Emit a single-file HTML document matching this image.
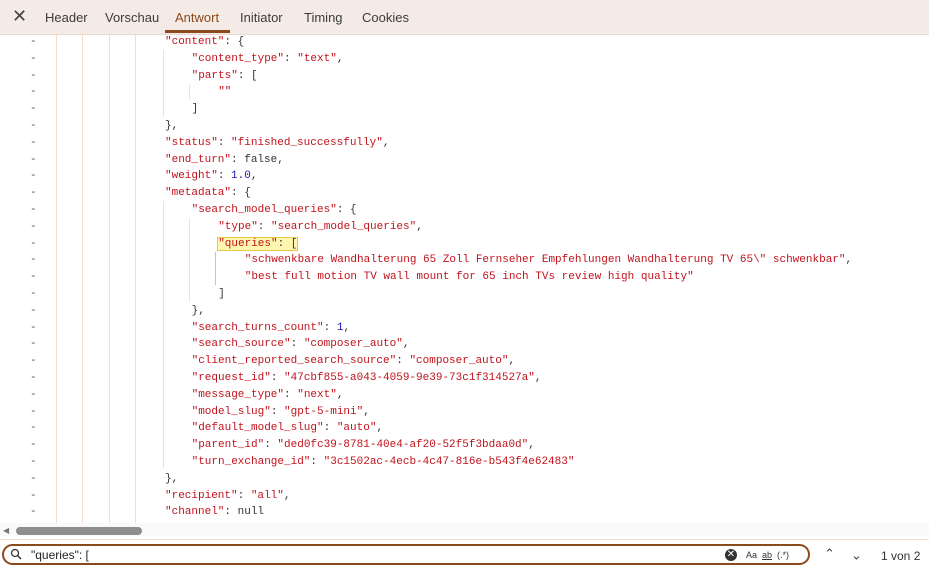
<!DOCTYPE html><html><head><style>
body{margin:0;width:929px;height:569px;overflow:hidden;background:#fff;font-family:"Liberation Sans",sans-serif;position:relative}
.tabs{position:absolute;left:0;top:0;width:929px;height:34px;background:#f4ebe6;border-bottom:1px solid #e8d8cf}
.tab{position:absolute;top:10px;font-size:13px;color:#3b3b3b}
.code{font-family:"Liberation Mono",monospace;font-size:11px}
.l{position:absolute;white-space:pre;height:17px;line-height:17px;color:#333}
.d{position:absolute;left:30px;color:#555;font-family:"Liberation Mono",monospace;font-size:11px}
.k{color:#c0131c}.s{color:#c0131c}.n{color:#1a1aa6}
.g{position:absolute;width:1px;background:#fbdcc8}
</style></head><body>
<div class="tabs">
<div style="position:absolute;left:12px;top:6px;font-size:18px;color:#444">✕</div>
<div class="tab" style="left:45px">Header</div>
<div class="tab" style="left:105px">Vorschau</div>
<div class="tab" style="left:175px;color:#8a4a1c">Antwort</div>
<div style="position:absolute;left:165px;top:30px;width:65px;height:3px;background:#8b4a1e"></div>
<div class="tab" style="left:240px">Initiator</div>
<div class="tab" style="left:304px">Timing</div>
<div class="tab" style="left:362px">Cookies</div>
</div>
<div class="g" style="left:56px;top:35px;height:488px"></div>
<div class="g" style="left:82px;top:35px;height:488px"></div>
<div class="g" style="left:109px;top:35px;height:488px"></div>
<div class="g" style="left:135px;top:35px;height:488px"></div>
<div class="g" style="left:163px;top:50px;height:67px"></div>
<div class="g" style="left:189px;top:84px;height:16px"></div>
<div class="g" style="left:163px;top:201px;height:267px"></div>
<div class="g" style="left:189px;top:218px;height:84px"></div>
<div class="g" style="left:215px;top:252px;height:33px;background:#e8b9a0"></div>
<div id="c" class="code"></div>
<div style="position:absolute;left:0;top:523px;width:929px;height:14px;background:#fafafa"></div>
<div style="position:absolute;left:3px;top:526px;font-size:8px;color:#777">◀</div>
<div style="position:absolute;left:16px;top:527px;width:126px;height:8px;border-radius:4px;background:#8e8e8e"></div>
<div style="position:absolute;left:0;top:539px;width:929px;height:1px;background:#f6dccb"></div>
<div style="position:absolute;left:2px;top:544px;width:808px;height:21px;border:2px solid #8b4a1e;border-radius:11px;box-sizing:border-box"></div>
<svg style="position:absolute;left:10px;top:548px" width="12" height="12"><circle cx="5" cy="5" r="3.5" fill="none" stroke="#333" stroke-width="1.3"/><line x1="7.5" y1="7.5" x2="11" y2="11" stroke="#333" stroke-width="1.5"/></svg>
<div style="position:absolute;left:31px;top:548px;font-size:12px;color:#222">"queries": [</div>
<div style="position:absolute;left:725px;top:549px;width:12px;height:12px;border-radius:6px;background:#333;color:#fff;font-size:10px;line-height:12px;text-align:center">✕</div>
<div style="position:absolute;left:746px;top:550px;font-size:9px;color:#333">Aa &nbsp;<u>ab</u> &nbsp;(.*)</div>
<div style="position:absolute;left:824px;top:546px;font-size:13px;color:#444">⌃</div>
<div style="position:absolute;left:851px;top:546px;font-size:13px;color:#444;transform:rotate(180deg)">⌃</div>
<div style="position:absolute;left:881px;top:549px;font-size:12px;color:#333">1 von 2</div>
<script>
const L=[[0,'<span class=k>"content"</span>: {'],[1,'<span class=k>"content_type"</span>: <span class=s>"text"</span>,'],[1,'<span class=k>"parts"</span>: ['],[2,'<span class=s>""</span>'],[1,']'],[0,'},'],[0,'<span class=k>"status"</span>: <span class=s>"finished_successfully"</span>,'],[0,'<span class=k>"end_turn"</span>: false,'],[0,'<span class=k>"weight"</span>: <span class=n>1.0</span>,'],[0,'<span class=k>"metadata"</span>: {'],[1,'<span class=k>"search_model_queries"</span>: {'],[2,'<span class=k>"type"</span>: <span class=s>"search_model_queries"</span>,'],[2,'<span style="background:#fff6b0;outline:1px solid #e8c84a"><span class=k>"queries"</span>: [</span>'],[3,'<span class=s>"schwenkbare Wandhalterung 65 Zoll Fernseher Empfehlungen Wandhalterung TV 65\\" schwenkbar"</span>,'],[3,'<span class=s>"best full motion TV wall mount for 65 inch TVs review high quality"</span>'],[2,']'],[1,'},'],[1,'<span class=k>"search_turns_count"</span>: <span class=n>1</span>,'],[1,'<span class=k>"search_source"</span>: <span class=s>"composer_auto"</span>,'],[1,'<span class=k>"client_reported_search_source"</span>: <span class=s>"composer_auto"</span>,'],[1,'<span class=k>"request_id"</span>: <span class=s>"47cbf855-a043-4059-9e39-73c1f314527a"</span>,'],[1,'<span class=k>"message_type"</span>: <span class=s>"next"</span>,'],[1,'<span class=k>"model_slug"</span>: <span class=s>"gpt-5-mini"</span>,'],[1,'<span class=k>"default_model_slug"</span>: <span class=s>"auto"</span>,'],[1,'<span class=k>"parent_id"</span>: <span class=s>"ded0fc39-8781-40e4-af20-52f5f3bdaa0d"</span>,'],[1,'<span class=k>"turn_exchange_id"</span>: <span class=s>"3c1502ac-4ecb-4c47-816e-b543f4e62483"</span>'],[0,'},'],[0,'<span class=k>"recipient"</span>: <span class=s>"all"</span>,'],[0,'<span class=k>"channel"</span>: null']];
let h='';L.forEach((x,i)=>{const t=34+i*16.8;h+=`<div class=d style="top:${t}px;line-height:17px">-</div><div class=l style="top:${t}px;left:${165+x[0]*26.6}px">${x[1]}</div>`});
document.getElementById('c').innerHTML=h;
</script>
</body></html>
